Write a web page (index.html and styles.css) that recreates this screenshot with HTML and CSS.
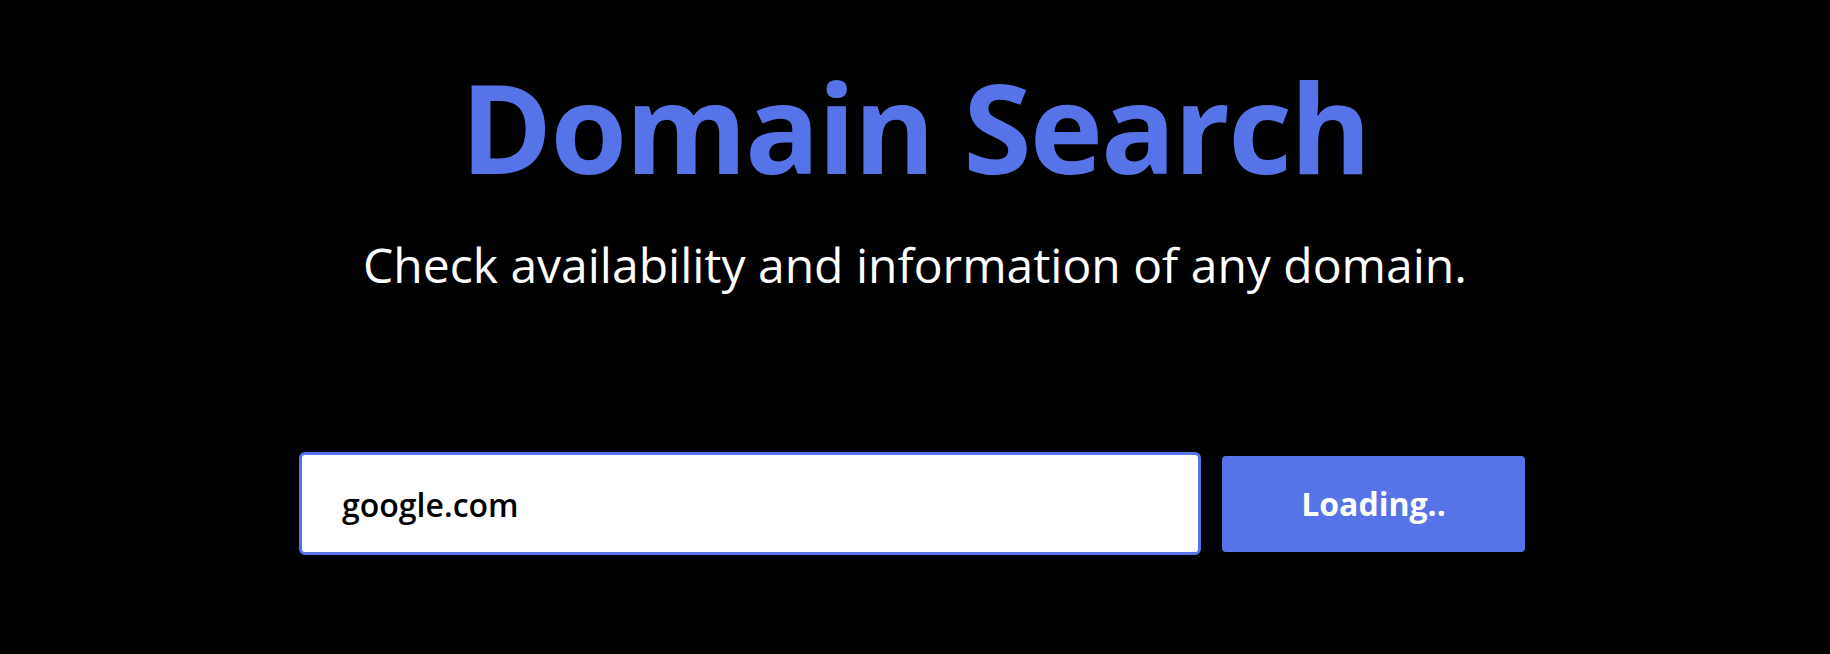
FILE: index.html
```html
<!DOCTYPE html>
<html lang="en">
<head>
<meta charset="utf-8">
<title>Domain Search</title>
<link rel="stylesheet" href="styles.css">
</head>
<body>
<main class="page">
  <h1 class="title">Domain Search</h1>
  <p class="subtitle">Check availability and information of any domain.</p>
  <form class="search">
    <input class="search-input" type="text" value="google.com">
    <button class="search-button" type="button">Loading..</button>
  </form>
</main>
</body>
</html>
```

FILE: styles.css
```css
html, body {
  margin: 0;
  padding: 0;
  background: #000;
  height: 100%;
}
body {
  font-family: "Open Sans", "Noto Sans", sans-serif;
  color: #fff;
}
.page {
  display: flex;
  flex-direction: column;
  align-items: center;
  padding-top: 56px;
}
.title {
  margin: 0;
  font-size: 124px;
  font-weight: 700;
  letter-spacing: -2px;
  line-height: 140px;
  color: #5673E8;
}
.subtitle {
  margin: 39px 0 0 0;
  font-size: 48px;
  font-weight: 400;
  line-height: 60px;
  color: #fff;
}
.search {
  display: flex;
  align-items: center;
  gap: 21px;
  margin-top: 157px;
  margin-right: 6px;
}
.search-input {
  box-sizing: border-box;
  width: 902px;
  height: 103px;
  border: 3px solid #5673E8;
  border-radius: 6px;
  padding: 2px 40px 0 40px;
  font-family: "Open Sans", sans-serif;
  font-size: 32px;
  font-weight: 600;
  color: #000;
  background: #fff;
  outline: none;
}
.search-button {
  box-sizing: border-box;
  width: 303px;
  height: 96px;
  border: none;
  border-radius: 4px;
  background: #5673E8;
  color: #fff;
  font-family: "Open Sans", sans-serif;
  font-size: 32px;
  font-weight: 700;
}
```
